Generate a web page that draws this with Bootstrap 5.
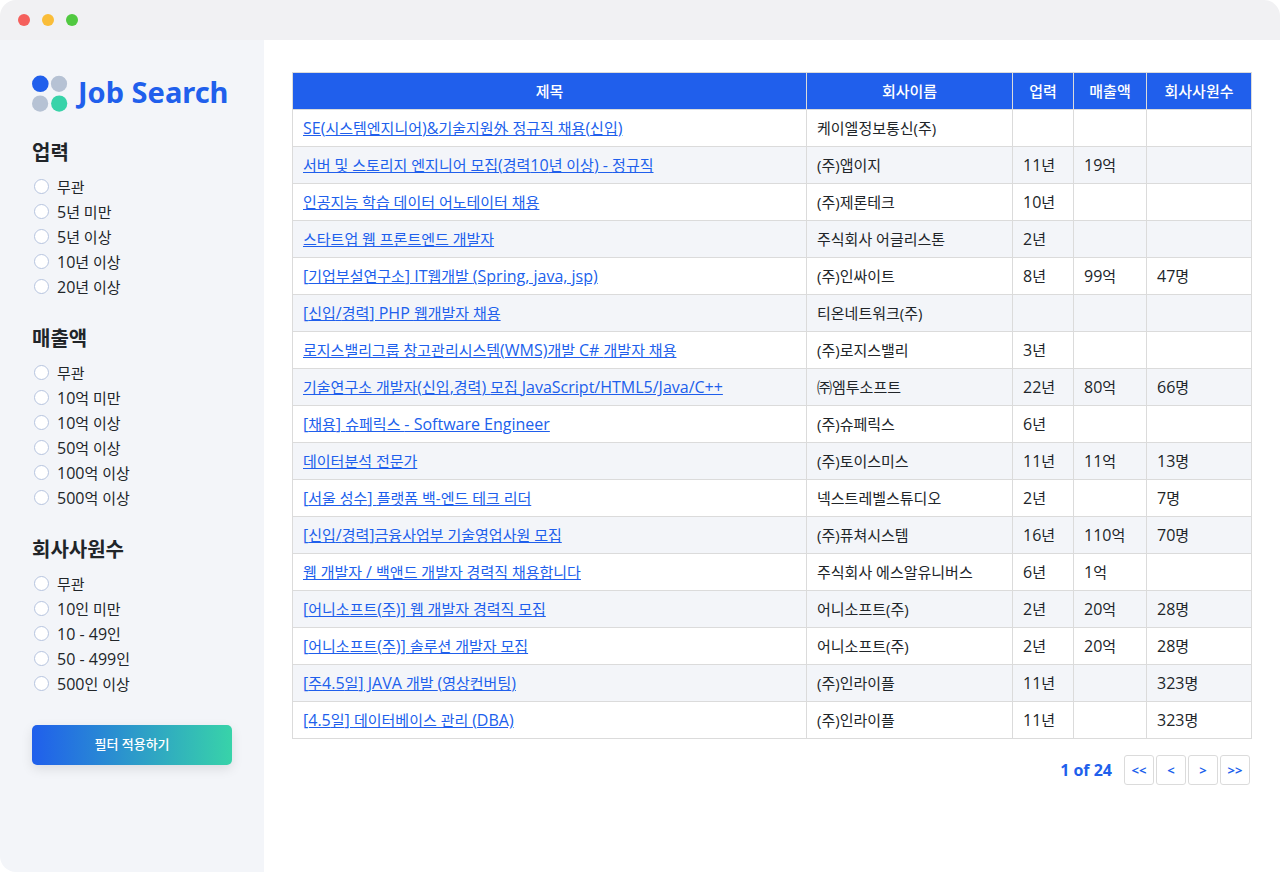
<!DOCTYPE html>
<html lang="ko">
<head>
<meta charset="utf-8">
<meta name="viewport" content="width=device-width, initial-scale=1">
<title>Job Search</title>
<link href="https://cdn.jsdelivr.net/npm/bootstrap@5.3.0/dist/css/bootstrap.min.css" rel="stylesheet">
<style>
  :root { --brand: #205fec; --mint: #38d3a9; --line: #dbdbdb; --soft: #f3f5f9; }
  body { font-family: "Open Sans", "Noto Sans CJK KR", sans-serif; font-size: 15px; line-height: 24px; color: #212529; background: #fff; }
  .window-frame { border-radius: 16px; overflow: hidden; }
  .title-bar { height: 40px; padding: 0 18px; gap: 12px; background: #f1f1f3; }
  .dot { width: 12px; height: 12px; border-radius: 50%; }
  .dot-close { background: #f5605c; }
  .dot-min { background: #fabd38; }
  .dot-max { background: #51c940; }
  .sidebar { width: 264px; padding: 32px; background: var(--soft); }
  .brand { gap: 10px; height: 42px; margin: 0 0 25px; color: var(--brand); font-family: "Noto Sans", sans-serif; font-size: 29px; font-weight: 700; line-height: 40px; white-space: nowrap; }
  .brand-name { padding-bottom: 2px; }
  .group-title { font-size: 20px; font-weight: 700; line-height: 28px; margin: 0 0 7px; }
  .filter-group { margin: 0 0 26px; }
  .filter-option { display: flex; align-items: center; height: 25px; padding: 0 0 0 2px; gap: 8px; margin: 0; min-height: 0; }
  .filter-option .form-check-input { float: none; margin: 0; width: 15px; height: 15px; border: 1px solid #b6c4df; }
  .lt { font-size: 16px; }
  .btn-apply { height: 40px; margin-top: 3px; padding: 0; border: 0; border-radius: 5px; color: #fff; font-size: 13px; font-weight: 500; background: linear-gradient(90deg, var(--brand), var(--mint)); box-shadow: 0 4px 12px rgba(0, 0, 0, .1); }
  .btn-apply:hover { color: #fff; }
  .content { min-width: 0; padding: 32px 28px; }
  .jobs { border-collapse: collapse; margin: 0 0 16px; color: inherit; }
  .jobs th, .jobs td { height: 37px; padding: 6px 10px; border: 1px solid var(--line); vertical-align: middle; }
  .jobs th { background: var(--brand); color: #fff; font-weight: 500; text-align: center; white-space: nowrap; }
  .jobs tbody tr:nth-child(even) td { background: var(--soft); }
  .jobs a { color: var(--brand); }
  .col-company { width: 206px; }
  .col-age { width: 61px; }
  .col-sales { width: 73px; }
  .col-staff { width: 105px; }
  .pager { gap: 2px; padding-right: 2px; color: var(--brand); }
  .pager-count { font-size: 16px; font-weight: 700; margin-right: 10px; }
  .btn-page { width: 30px; height: 30px; padding: 0; border: 1px solid var(--line); border-radius: 3px; background: #fff; color: var(--brand); font-size: 13px; font-weight: 700; line-height: 28px; }
</style>
</head>
<body>
<div class="window-frame d-flex flex-column min-vh-100">
  <header class="title-bar d-flex align-items-center">
    <span class="dot dot-close"></span><span class="dot dot-min"></span><span class="dot dot-max"></span>
  </header>
  <div class="d-flex flex-grow-1">
    <aside class="sidebar flex-shrink-0">
      <h1 class="brand d-flex align-items-center">
        <svg width="36" height="38" viewBox="0 0 36 38" aria-hidden="true">
          <circle cx="8.3" cy="9.8" r="8.3" fill="#205fec"/><circle cx="27" cy="9.8" r="8.1" fill="#b6c2d4"/>
          <circle cx="8.1" cy="29.6" r="8.1" fill="#b6c2d4"/><circle cx="27.2" cy="29.6" r="8.1" fill="#38d3a9"/>
        </svg>
        <span class="brand-name">Job Search</span>
      </h1>
      <form>
        <fieldset class="filter-group">
          <legend class="group-title">업력</legend>
          <div class="filter-option"><input class="form-check-input" type="radio" name="age" id="a0"><label for="a0">무관</label></div>
          <div class="filter-option"><input class="form-check-input" type="radio" name="age" id="a1"><label for="a1"><span class="lt">5</span>년 미만</label></div>
          <div class="filter-option"><input class="form-check-input" type="radio" name="age" id="a2"><label for="a2"><span class="lt">5</span>년 이상</label></div>
          <div class="filter-option"><input class="form-check-input" type="radio" name="age" id="a3"><label for="a3"><span class="lt">10</span>년 이상</label></div>
          <div class="filter-option"><input class="form-check-input" type="radio" name="age" id="a4"><label for="a4"><span class="lt">20</span>년 이상</label></div>
        </fieldset>
        <fieldset class="filter-group">
          <legend class="group-title">매출액</legend>
          <div class="filter-option"><input class="form-check-input" type="radio" name="sales" id="s0"><label for="s0">무관</label></div>
          <div class="filter-option"><input class="form-check-input" type="radio" name="sales" id="s1"><label for="s1"><span class="lt">10</span>억 미만</label></div>
          <div class="filter-option"><input class="form-check-input" type="radio" name="sales" id="s2"><label for="s2"><span class="lt">10</span>억 이상</label></div>
          <div class="filter-option"><input class="form-check-input" type="radio" name="sales" id="s3"><label for="s3"><span class="lt">50</span>억 이상</label></div>
          <div class="filter-option"><input class="form-check-input" type="radio" name="sales" id="s4"><label for="s4"><span class="lt">100</span>억 이상</label></div>
          <div class="filter-option"><input class="form-check-input" type="radio" name="sales" id="s5"><label for="s5"><span class="lt">500</span>억 이상</label></div>
        </fieldset>
        <fieldset class="filter-group">
          <legend class="group-title">회사사원수</legend>
          <div class="filter-option"><input class="form-check-input" type="radio" name="staff" id="p0"><label for="p0">무관</label></div>
          <div class="filter-option"><input class="form-check-input" type="radio" name="staff" id="p1"><label for="p1"><span class="lt">10</span>인 미만</label></div>
          <div class="filter-option"><input class="form-check-input" type="radio" name="staff" id="p2"><label for="p2"><span class="lt">10 - 49</span>인</label></div>
          <div class="filter-option"><input class="form-check-input" type="radio" name="staff" id="p3"><label for="p3"><span class="lt">50 - 499</span>인</label></div>
          <div class="filter-option"><input class="form-check-input" type="radio" name="staff" id="p4"><label for="p4"><span class="lt">500</span>인 이상</label></div>
        </fieldset>
        <button type="button" class="btn btn-apply w-100">필터 적용하기</button>
      </form>
    </aside>
    <main class="content flex-grow-1">
      <table class="jobs w-100">
        <thead>
          <tr><th>제목</th><th class="col-company">회사이름</th><th class="col-age">업력</th><th class="col-sales">매출액</th><th class="col-staff">회사사원수</th></tr>
        </thead>
        <tbody>
          <tr><td><a href="#"><span class="lt">SE(</span>시스템엔지니어<span class="lt">)&amp;</span>기술지원外 정규직 채용<span class="lt">(</span>신입<span class="lt">)</span></a></td><td>케이엘정보통신(주)</td><td></td><td></td><td></td></tr>
          <tr><td><a href="#">서버 및 스토리지 엔지니어 모집<span class="lt">(</span>경력<span class="lt">10</span>년 이상<span class="lt">) - </span>정규직</a></td><td>(주)앱이지</td><td><span class="lt">11</span>년</td><td><span class="lt">19</span>억</td><td></td></tr>
          <tr><td><a href="#">인공지능 학습 데이터 어노테이터 채용</a></td><td>(주)제론테크</td><td><span class="lt">10</span>년</td><td></td><td></td></tr>
          <tr><td><a href="#">스타트업 웹 프론트엔드 개발자</a></td><td>주식회사 어글리스톤</td><td><span class="lt">2</span>년</td><td></td><td></td></tr>
          <tr><td><a href="#"><span class="lt">[</span>기업부설연구소<span class="lt">] IT</span>웹개발 <span class="lt">(Spring, java, jsp)</span></a></td><td>(주)인싸이트</td><td><span class="lt">8</span>년</td><td><span class="lt">99</span>억</td><td><span class="lt">47</span>명</td></tr>
          <tr><td><a href="#"><span class="lt">[</span>신입<span class="lt">/</span>경력<span class="lt">] PHP </span>웹개발자 채용</a></td><td>티온네트워크(주)</td><td></td><td></td><td></td></tr>
          <tr><td><a href="#">로지스밸리그룹 창고관리시스템<span class="lt">(WMS)</span>개발 <span class="lt">C# </span>개발자 채용</a></td><td>(주)로지스밸리</td><td><span class="lt">3</span>년</td><td></td><td></td></tr>
          <tr><td><a href="#">기술연구소 개발자<span class="lt">(</span>신입<span class="lt">,</span>경력<span class="lt">) </span>모집 <span class="lt">JavaScript/HTML5/Java/C++</span></a></td><td>㈜엠투소프트</td><td><span class="lt">22</span>년</td><td><span class="lt">80</span>억</td><td><span class="lt">66</span>명</td></tr>
          <tr><td><a href="#"><span class="lt">[</span>채용<span class="lt">] </span>슈페릭스 <span class="lt">- Software Engineer</span></a></td><td>(주)슈페릭스</td><td><span class="lt">6</span>년</td><td></td><td></td></tr>
          <tr><td><a href="#">데이터분석 전문가</a></td><td>(주)토이스미스</td><td><span class="lt">11</span>년</td><td><span class="lt">11</span>억</td><td><span class="lt">13</span>명</td></tr>
          <tr><td><a href="#"><span class="lt">[</span>서울 성수<span class="lt">] </span>플랫폼 백-엔드 테크 리더</a></td><td>넥스트레벨스튜디오</td><td><span class="lt">2</span>년</td><td></td><td><span class="lt">7</span>명</td></tr>
          <tr><td><a href="#"><span class="lt">[</span>신입<span class="lt">/</span>경력<span class="lt">]</span>금융사업부 기술영업사원 모집</a></td><td>(주)퓨쳐시스템</td><td><span class="lt">16</span>년</td><td><span class="lt">110</span>억</td><td><span class="lt">70</span>명</td></tr>
          <tr><td><a href="#">웹 개발자 <span class="lt">/ </span>백앤드 개발자 경력직 채용합니다</a></td><td>주식회사 에스알유니버스</td><td><span class="lt">6</span>년</td><td><span class="lt">1</span>억</td><td></td></tr>
          <tr><td><a href="#"><span class="lt">[</span>어니소프트<span class="lt">(</span>주<span class="lt">)] </span>웹 개발자 경력직 모집</a></td><td>어니소프트(주)</td><td><span class="lt">2</span>년</td><td><span class="lt">20</span>억</td><td><span class="lt">28</span>명</td></tr>
          <tr><td><a href="#"><span class="lt">[</span>어니소프트<span class="lt">(</span>주<span class="lt">)] </span>솔루션 개발자 모집</a></td><td>어니소프트(주)</td><td><span class="lt">2</span>년</td><td><span class="lt">20</span>억</td><td><span class="lt">28</span>명</td></tr>
          <tr><td><a href="#"><span class="lt">[</span>주<span class="lt">4.5</span>일<span class="lt">] JAVA </span>개발 <span class="lt">(</span>영상컨버팅<span class="lt">)</span></a></td><td>(주)인라이플</td><td><span class="lt">11</span>년</td><td></td><td><span class="lt">323</span>명</td></tr>
          <tr><td><a href="#"><span class="lt">[4.5</span>일<span class="lt">] </span>데이터베이스 관리 <span class="lt">(DBA)</span></a></td><td>(주)인라이플</td><td><span class="lt">11</span>년</td><td></td><td><span class="lt">323</span>명</td></tr>
        </tbody>
      </table>
      <nav class="pager d-flex justify-content-end align-items-center" aria-label="페이지">
        <span class="pager-count">1 of 24</span>
        <button type="button" class="btn btn-page">&lt;&lt;</button>
        <button type="button" class="btn btn-page">&lt;</button>
        <button type="button" class="btn btn-page">&gt;</button>
        <button type="button" class="btn btn-page">&gt;&gt;</button>
      </nav>
    </main>
  </div>
</div>
<script src="https://cdn.jsdelivr.net/npm/bootstrap@5.3.0/dist/js/bootstrap.bundle.min.js"></script>
</body>
</html>
